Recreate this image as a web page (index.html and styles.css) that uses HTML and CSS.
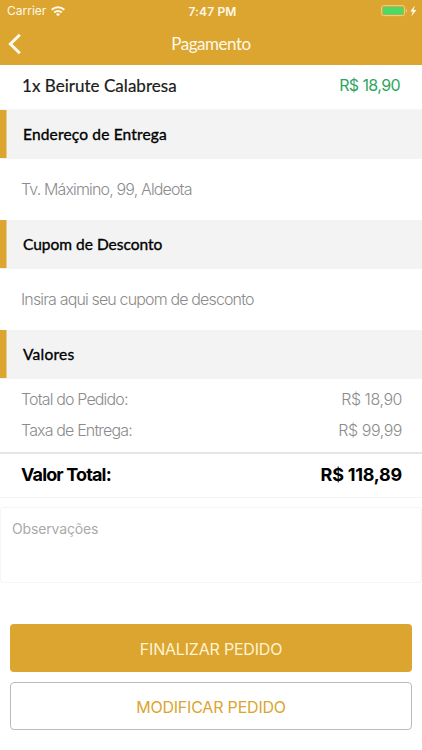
FILE: index.html
```html
<!DOCTYPE html>
<html lang="pt-BR">
<head>
<meta charset="utf-8">
<meta name="viewport" content="width=device-width, initial-scale=1">
<title>Pagamento</title>
<link rel="stylesheet" href="styles.css">
</head>
<body>
<header class="top">
  <div class="status">
    <div class="status-left"><span class="carrier">Carrier</span>
      <svg class="wifi" viewBox="0 0 16 12" width="16" height="12"><g fill="none" stroke="#fff9e9" stroke-width="2"><path d="M1.7 4.8a8.9 8.9 0 0 1 12.6 0"/><path d="M4.2 7.5a5.4 5.4 0 0 1 7.6 0"/></g><path d="M8 11.3 5.9 9.2a3 3 0 0 1 4.2 0z" fill="#fff9e9"/></svg>
    </div>
    <span class="clock">7:47 PM</span>
    <svg class="battery" viewBox="0 0 38 12" width="38" height="12"><rect x="1.6" y=".6" width="23" height="10" rx="2" fill="none" stroke="#f0d18c"/><rect x="3" y="2" width="20.3" height="7.4" rx="1" fill="#4cd964"/><path d="M26 4v3.4q1-.4 1-1.7T26 4z" fill="#f0d18c"/><path d="M34.8.6 30.2 6.4h2.5L31.4 11.2l5-6.2h-2.7z" fill="#fff9e9"/></svg>
  </div>
  <nav class="nav">
    <svg class="back" viewBox="0 0 14 22" width="14" height="22"><path d="M11.8 1.8 2.4 11l9.4 9.2" fill="none" stroke="#fffaf0" stroke-width="3"/></svg>
    <h1 class="title">Pagamento</h1>
  </nav>
</header>
<main>
  <div class="item"><span class="item-name">1x Beirute Calabresa</span><span class="item-price">R$ 18,90</span></div>
  <h2 class="section address">Endereço de Entrega</h2>
  <p class="field">Tv. Máximino, 99, Aldeota</p>
  <h2 class="section">Cupom de Desconto</h2>
  <p class="field">Insira aqui seu cupom de desconto</p>
  <h2 class="section short">Valores</h2>
  <div class="values">
    <div class="row"><span>Total do Pedido:</span><span class="amount">R$ 18,90</span></div>
    <div class="row"><span>Taxa de Entrega:</span><span class="amount">R$ 99,99</span></div>
  </div>
  <div class="total"><span>Valor Total:</span><span class="total-price">R$ 118,89</span></div>
  <div class="notes">Observações</div>
  <div class="actions">
    <button class="btn primary">FINALIZAR PEDIDO</button>
    <button class="btn outline">MODIFICAR PEDIDO</button>
  </div>
</main>
</body>
</html>
```
FILE: styles.css
```css
* { box-sizing: border-box; }
body { margin: 0; width: 422px; height: 750px; overflow: hidden; background: #fff; font-family: Inter, "Liberation Sans", sans-serif; color: #8c8c8c; }
h1, h2, p { margin: 0; font-weight: 400; }
svg { display: block; }
.top { height: 65px; background: #dba52f; color: #fff9e9; }
.status { height: 22px; display: grid; grid-template-columns: 1fr auto 1fr; align-items: center; padding: 0 4px 0 7px; }
.status-left { display: flex; align-items: center; gap: 4px; }
.carrier { font-size: 12px; letter-spacing: 0; line-height: 22px; }
.clock { font-size: 12px; font-weight: 600; letter-spacing: .15px; }
.battery { justify-self: end; }
.nav { height: 43px; display: grid; grid-template-columns: 1fr auto 1fr; align-items: center; padding: 0 8px; }
.title { font: 400 17px/41px Lato, sans-serif; letter-spacing: -.45px; }
.item { height: 45px; display: flex; justify-content: space-between; padding: 0 22px 0 22px; line-height: 42px; border-bottom: 1px solid #f6f6f6; }
.item-name { font-family: Lato, sans-serif; font-size: 17px; letter-spacing: .03px; color: #1b1b1b; -webkit-text-stroke: .2px #1b1b1b; }
.item-price { font-size: 16px; letter-spacing: -.6px; line-height: 40px; color: #2fa55f; }
.section { height: 49px; padding-left: 23px; background: linear-gradient(#dba52f, #dba52f) 0 0 / 6.5px 48px no-repeat #f3f3f3; font: 400 15.5px/48px Lato, sans-serif; color: #000; -webkit-text-stroke: .35px #000; }
.address { letter-spacing: .17px; }
.short { letter-spacing: .25px; }
.field { height: 61px; padding-left: 21px; font-size: 16px; line-height: 61px; letter-spacing: -.85px; font-weight: 300; }
.values { height: 75px; padding: 4px 20px 0 21px; border-bottom: 2px solid #e5e5e5; }
.row { height: 31px; display: flex; justify-content: space-between; font-size: 16px; line-height: 32px; letter-spacing: -.85px; font-weight: 300; }
.amount { letter-spacing: -.45px; }
.total { height: 44px; display: flex; justify-content: space-between; padding: 0 20px 0 21px; font-size: 18px; line-height: 42px; font-weight: 700; letter-spacing: -.85px; color: #000; border-bottom: 1px solid #f6f3f3; }
.total-price { letter-spacing: -.25px; }
.notes { height: 76px; margin-top: 9px; padding: 10px 11px; border: 1px solid #f5f5f5; border-radius: 3px; font-size: 14px; line-height: 22px; letter-spacing: -.15px; color: #aaa; }
.actions { display: flex; flex-direction: column; gap: 10px; padding: 41px 10px 0; }
.btn { height: 48px; padding: 0; border: 0; border-radius: 4px; font: 400 16px/50px Inter, sans-serif; letter-spacing: -.2px; }
.primary { background: #dba52f; color: #fff3d2; }
.outline { background: #fff; border: 1px solid #bbb; color: #dba52f; line-height: 48px; }
```
